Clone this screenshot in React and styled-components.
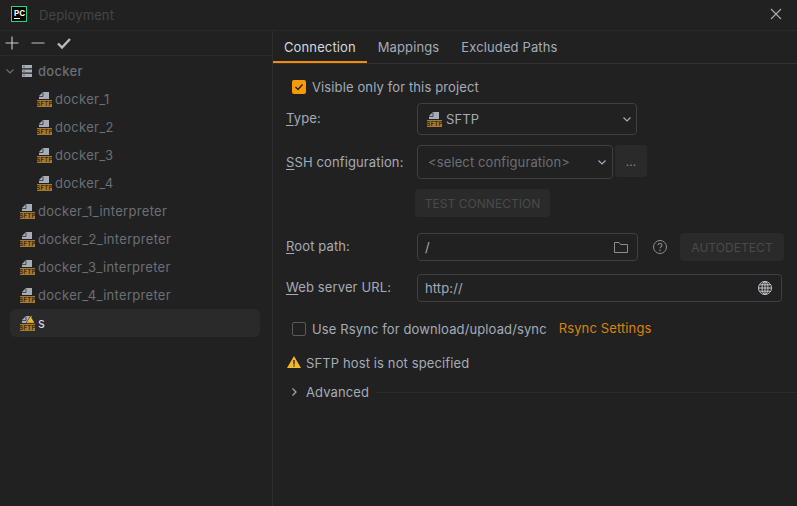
import React from 'react';
import styled, { createGlobalStyle } from 'styled-components';

const GlobalStyle = createGlobalStyle`
  html, body {
    margin: 0;
    padding: 0;
    height: 100%;
    background: #212121;
  }
  #root {
    height: 100%;
  }
`;

const Window = styled.div`
  width: 797px;
  height: 506px;
  overflow: hidden;
  display: flex;
  flex-direction: column;
  background: #212121;
  color: #a4acb8;
  font-family: Inter, "Noto Sans", sans-serif;
  font-size: 13px;
  letter-spacing: 0.12px;
`;

const TitleBar = styled.div`
  height: 31px;
  flex: none;
  display: flex;
  align-items: center;
  padding: 0 13px 3px 11px;
  box-sizing: border-box;
  border-bottom: 1px solid #2a2a2a;
`;

const Logo = styled.div`
  width: 16px;
  height: 16px;
  box-sizing: border-box;
  border: 1px solid #21d789;
  background: #000;
  color: #fff;
  font-size: 8px;
  font-weight: 700;
  line-height: 8px;
  letter-spacing: 0;
  padding: 2px 0 0 2px;
`;

const LogoBar = styled.div`
  width: 6px;
  height: 1px;
  margin-top: 1px;
  background: #fff;
`;

const Title = styled.div`
  margin-left: 12px;
  padding-top: 2px;
  color: #454545;
  flex: 1;
`;

const Body = styled.div`
  flex: 1;
  display: flex;
  min-height: 0;
`;

const Sidebar = styled.div`
  width: 272px;
  flex: none;
  border-right: 1px solid #2e2e2e;
`;

const Toolbar = styled.div`
  height: 25px;
  box-sizing: border-box;
  display: flex;
  align-items: center;
  gap: 10px;
  padding: 0 0 1px 4px;
  border-bottom: 1px solid #2a2a2a;
`;

const ToolIcon = styled.svg`
  width: 16px;
  height: 16px;
  flex: none;
`;

const Tree = styled.div`
  padding: 1px 12px 0 10px;
`;

const Row = styled.div`
  height: 28px;
  display: flex;
  align-items: center;
  border-radius: 6px;
  margin-left: ${(p) => (p.$group ? -8 : 0)}px;
  padding-left: ${(p) => p.$indent}px;
  color: ${(p) => (p.$selected ? '#d7dde8' : '#6b6f76')};
  background: ${(p) => (p.$selected ? '#2a2a2a' : 'transparent')};
  font-weight: ${(p) => (p.$group ? 500 : 400)};
  letter-spacing: 0.3px;
`;

const RowIcon = styled.svg`
  width: 16px;
  height: 16px;
  flex: none;
  margin-right: ${(p) => p.$gap ?? 2}px;
`;

const Main = styled.div`
  flex: 1;
  display: flex;
  flex-direction: column;
  min-width: 0;
`;

const Tabs = styled.div`
  height: 33px;
  flex: none;
  box-sizing: border-box;
  display: flex;
  border-bottom: 1px solid #333;
`;

const Tab = styled.div`
  height: 32px;
  box-sizing: border-box;
  padding: 2px 11px 0;
  display: flex;
  align-items: center;
  color: ${(p) => (p.$active ? '#d4d8df' : '#a4acb8')};
  border-bottom: 2px solid ${(p) => (p.$active ? '#f48c06' : 'transparent')};
`;

const Form = styled.div`
  padding: 0 13px 0 13px;
  display: flex;
  flex-direction: column;
`;

const CheckRow = styled.div`
  display: flex;
  align-items: center;
  height: 20px;
  margin-top: ${(p) => p.$top}px;
  padding-left: 6px;
  gap: 6px;
`;

const CheckBox = styled.div`
  width: 14px;
  height: 14px;
  flex: none;
  border-radius: 2px;
  box-sizing: border-box;
  display: flex;
  align-items: center;
  justify-content: center;
  background: ${(p) => (p.$checked ? '#f59b0b' : 'transparent')};
  border: ${(p) => (p.$checked ? 'none' : '1px solid #5a5a5a')};
`;

const Link = styled.span`
  color: #d9820f;
  margin-left: 6px;
  position: relative;
  top: -1px;
`;

const FieldRow = styled.div`
  display: flex;
  align-items: flex-start;
  margin-top: ${(p) => p.$top}px;
`;

const Label = styled.div`
  width: 131px;
  flex: none;
  height: ${(p) => p.$height}px;
  display: flex;
  align-items: center;
  padding-top: ${(p) => p.$pad ?? 0}px;
  padding-bottom: ${(p) => p.$lift ?? 0}px;
  box-sizing: border-box;
  white-space: pre;
`;

const Mnemonic = styled.span`
  text-decoration: underline;
  text-underline-offset: 2px;
`;

const Field = styled.div`
  width: ${(p) => p.$width}px;
  height: ${(p) => p.$height}px;
  flex: none;
  box-sizing: border-box;
  border: 1px solid #3f3f3f;
  border-radius: 4px;
  display: flex;
  align-items: center;
  padding: 0 ${(p) => p.$right ?? 8}px 0 ${(p) => p.$left ?? 7}px;
  color: ${(p) => (p.$muted ? '#6b6f76' : '#a4acb8')};
`;

const FieldText = styled.div`
  flex: 1;
  white-space: pre;
`;

const GhostButton = styled.div`
  flex: none;
  height: ${(p) => p.$height}px;
  width: ${(p) => p.$width}px;
  margin-left: ${(p) => p.$left ?? 0}px;
  box-sizing: border-box;
  background: #2a2a2a;
  border-radius: 4px;
  color: ${(p) => p.$color ?? '#4a4a4a'};
  font-size: 12px;
  letter-spacing: 0.05px;
  display: flex;
  align-items: center;
  justify-content: center;
`;

const HelpSlot = styled.div`
  width: 16px;
  height: 28px;
  margin: 0 12px 0 14px;
  flex: none;
  display: flex;
  align-items: center;
`;

const Warning = styled.div`
  display: flex;
  align-items: center;
  gap: 4px;
  height: 20px;
  margin-top: 14px;
`;

const Advanced = styled.div`
  display: flex;
  align-items: center;
  height: 20px;
  margin-top: 9px;
  margin-right: -13px;
`;

const AdvancedLine = styled.div`
  flex: 1;
  height: 1px;
  background: #2a2a2a;
  margin-left: 7px;
`;

const SftpIcon = ({ warning, gap }) => (
  <RowIcon viewBox="0 0 16 16" $gap={gap}>
    <path d="M2 8V5l4-4h6v7z" fill="#a7adb6" />
    <path d="M2 5.5h4V1.5" fill="none" stroke="#212121" strokeWidth="0.7" />
    {warning && <path d="M10.5 1 15 8.2H6z" fill="#f2b632" stroke="#212121" strokeWidth="0.6" />}
    <rect x="0" y="9" width="15" height="7" fill="#a87a30" />
    <text x="7.5" y="15" textAnchor="middle" fontSize="6" fontWeight="700" fill="#3a2a10" fontFamily="Inter, sans-serif">
      SFTP
    </text>
  </RowIcon>
);

const Chevron = ({ dir = 'down', color = '#a4acb8', gap = 0 }) => (
  <RowIcon viewBox="0 0 16 16" $gap={gap}>
    <path
      d={dir === 'down' ? 'M4.5 6.5 8 10l3.5-3.5' : 'M6.5 4.5 10 8l-3.5 3.5'}
      fill="none"
      stroke={color}
      strokeWidth="1.2"
    />
  </RowIcon>
);

const SERVERS = ['docker_1', 'docker_2', 'docker_3', 'docker_4'];
const INTERPRETERS = SERVERS.map((name) => `${name}_interpreter`);

export default function App() {
  return (
    <>
      <GlobalStyle />
      <Window>
        <TitleBar>
          <Logo>
            PC
            <LogoBar />
          </Logo>
          <Title>Deployment</Title>
          <ToolIcon viewBox="0 0 16 16">
            <path d="M3 3l10 10M13 3 3 13" stroke="#a9adb3" strokeWidth="1.1" fill="none" />
          </ToolIcon>
        </TitleBar>
        <Body>
          <Sidebar>
            <Toolbar>
              <ToolIcon viewBox="0 0 16 16">
                <path d="M8 1.5v13M1.5 8h13" stroke="#c9ccd1" strokeWidth="1.1" fill="none" />
              </ToolIcon>
              <ToolIcon viewBox="0 0 16 16">
                <path d="M1.5 8h13" stroke="#b4b7bc" strokeWidth="1.1" fill="none" />
              </ToolIcon>
              <ToolIcon viewBox="0 0 16 16">
                <path d="M2 8.5 6 12.5 14 4" stroke="#b8bbc0" strokeWidth="2.4" fill="none" />
              </ToolIcon>
            </Toolbar>
            <Tree>
              <Row $group $indent={0}>
                <Chevron color="#6b6f76" gap={1} />
                <RowIcon viewBox="0 0 16 16" $gap={3}>
                  <path d="M3 2h10v3.2H3zM3 6.4h10v3.2H3zM3 10.8h10V14H3z" fill="#a7adb6" />
                  <path d="M4.5 3.6h1M4.5 8h1M4.5 12.4h1" stroke="#212121" strokeWidth="1" />
                </RowIcon>
                docker
              </Row>
              {SERVERS.map((name) => (
                <Row key={name} $indent={27}>
                  <SftpIcon />
                  {name}
                </Row>
              ))}
              {INTERPRETERS.map((name) => (
                <Row key={name} $indent={10}>
                  <SftpIcon />
                  {name}
                </Row>
              ))}
              <Row $selected $indent={10}>
                <SftpIcon warning />
                s
              </Row>
            </Tree>
          </Sidebar>
          <Main>
            <Tabs>
              <Tab $active>Connection</Tab>
              <Tab>Mappings</Tab>
              <Tab>Excluded Paths</Tab>
            </Tabs>
            <Form>
              <CheckRow $top={13}>
                <CheckBox $checked>
                  <svg width="12" height="12" viewBox="0 0 12 12">
                    <path d="M2.5 6 5 8.5 9.5 3.5" fill="none" stroke="#2a1a00" strokeWidth="1.4" />
                  </svg>
                </CheckBox>
                Visible only for this project
              </CheckRow>
              <FieldRow $top={6}>
                <Label $height={30}>
                  <span>
                    <Mnemonic>T</Mnemonic>ype:
                  </span>
                </Label>
                <Field $width={220} $height={32} $left={9} $right={1}>
                  <SftpIcon gap={3} />
                  <FieldText>SFTP</FieldText>
                  <Chevron />
                </Field>
              </FieldRow>
              <FieldRow $top={10}>
                <Label $height={30} $pad={3}>
                  <span>
                    <Mnemonic>S</Mnemonic>SH configuration:
                  </span>
                </Label>
                <Field $width={196} $height={34} $left={10} $right={2} $muted>
                  <FieldText>{'<select configuration>'}</FieldText>
                  <Chevron />
                </Field>
                <GhostButton $width={32} $height={32} $left={2} $color="#85888d">
                  ...
                </GhostButton>
              </FieldRow>
              <FieldRow $top={10}>
                <GhostButton $width={135} $height={28} $left={129}>
                  TEST CONNECTION
                </GhostButton>
              </FieldRow>
              <FieldRow $top={16}>
                <Label $height={28} $lift={2}>
                  <span>
                    <Mnemonic>R</Mnemonic>oot path:
                  </span>
                </Label>
                <Field $width={221} $height={28}>
                  <FieldText>/</FieldText>
                  <ToolIcon viewBox="0 0 16 16">
                    <path d="M1.5 3.5h4.5l1.5 2h7v8h-13z" fill="none" stroke="#8a8e95" strokeWidth="1" />
                  </ToolIcon>
                </Field>
                <HelpSlot>
                  <ToolIcon viewBox="0 0 16 16">
                    <circle cx="8" cy="8" r="6.5" fill="none" stroke="#8a8e95" strokeWidth="1" />
                    <path d="M6 6.3c0-2.4 4-2.4 4 0 0 1.6-2 1.5-2 3" fill="none" stroke="#8a8e95" strokeWidth="1.1" />
                    <circle cx="8" cy="11.3" r="0.8" fill="#8a8e95" />
                  </ToolIcon>
                </HelpSlot>
                <GhostButton $width={104} $height={28}>
                  AUTODETECT
                </GhostButton>
              </FieldRow>
              <FieldRow $top={13}>
                <Label $height={28} $lift={2}>
                  <span>
                    <Mnemonic>W</Mnemonic>eb server URL:
                  </span>
                </Label>
                <Field $width={365} $height={28}>
                  <FieldText>http://</FieldText>
                  <ToolIcon viewBox="0 0 16 16">
                    <g fill="none" stroke="#c4c7cc" strokeWidth="1">
                      <circle cx="8" cy="8" r="6.5" />
                      <ellipse cx="8" cy="8" rx="3" ry="6.5" />
                      <path d="M1.5 8h13M2.5 4.8h11M2.5 11.2h11M8 1.5v13" />
                    </g>
                  </ToolIcon>
                </Field>
              </FieldRow>
              <CheckRow $top={17}>
                <CheckBox />
                <span>Use Rsync for download/upload/sync</span>
                <Link>Rsync Settings</Link>
              </CheckRow>
              <Warning>
                <ToolIcon viewBox="0 0 16 16">
                  <path d="M8 1 15 13H1z" fill="#f2b632" />
                  <path d="M8 5v4.4M8 10.2v1.4" stroke="#212121" strokeWidth="1.3" />
                </ToolIcon>
                SFTP host is not specified
              </Warning>
              <Advanced>
                <Chevron dir="right" gap={4} />
                Advanced
                <AdvancedLine />
              </Advanced>
            </Form>
          </Main>
        </Body>
      </Window>
    </>
  );
}
